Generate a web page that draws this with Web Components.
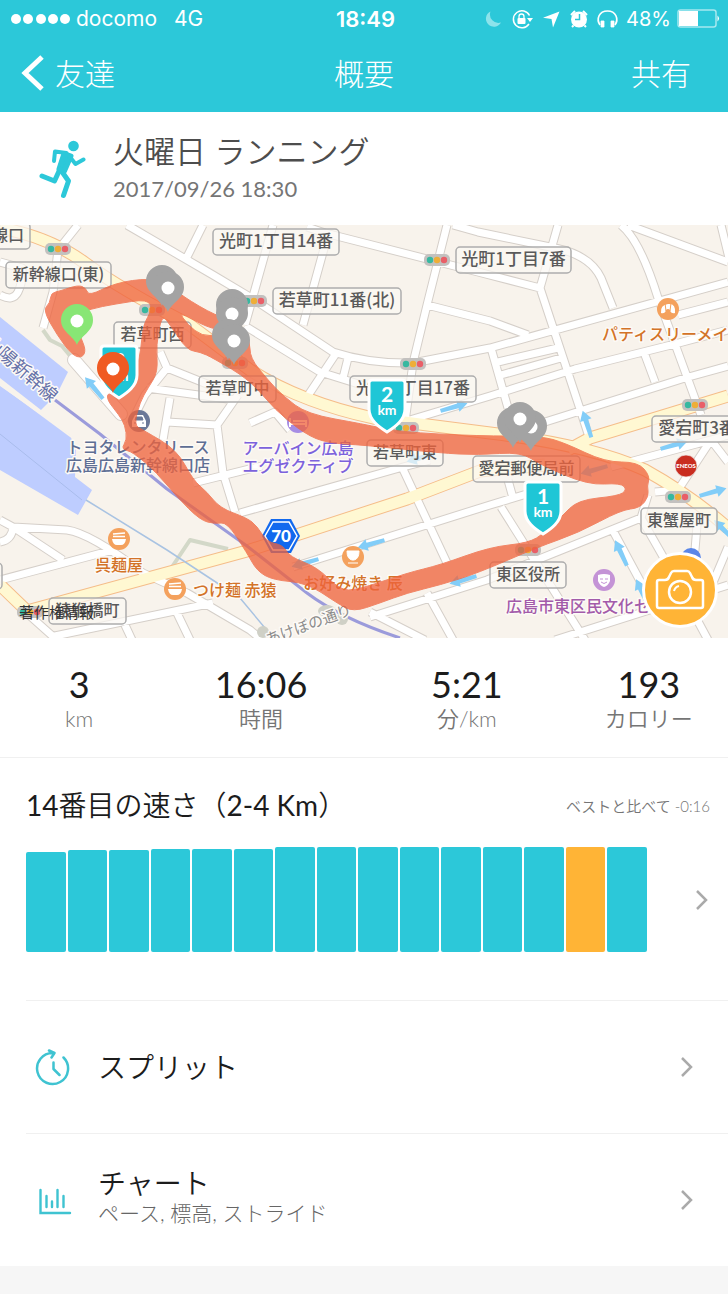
<!DOCTYPE html>
<html lang="ja">
<head>
<meta charset="utf-8">
<meta name="viewport" content="width=device-width, initial-scale=1">
<title>概要</title>
<style>
  html, body { margin: 0; background: #f6f6f6; }
  body { font-family: Lato, "Noto Sans CJK JP", sans-serif; color: #222; }
</style>
</head>
<body>
<run-summary></run-summary>

<script>
const define = (name, html) => {
  const tpl = document.createElement('template');
  tpl.innerHTML = html;
  customElements.define(name, class extends HTMLElement {
    constructor() {
      super();
      this.attachShadow({ mode: 'open' }).append(tpl.content.cloneNode(true));
    }
  });
};

/* Phone status line */
define('status-bar', `
<style>
  :host { display: grid; grid-template-columns: 1fr auto 1fr; align-items: center; height: 38px;
    padding: 0 8px 0 11px; color: #fff; font: 400 21px/24px Inter, sans-serif; }
  div { display: flex; align-items: center; }
  .left { gap: 5px; }
  .net { margin-left: 12px; }
  .right { justify-content: flex-end; gap: 6px; font-size: 20px; }
  .time { font-weight: 600; font-size: 22px; }
  svg { display: block; flex: none; }
</style>
<div class="left">
  <svg width="60" height="12" fill="#fff"><circle cx="5" cy="6" r="5"/><circle cx="17" cy="6" r="5"/><circle cx="30" cy="6" r="5"/><circle cx="42" cy="6" r="5"/><circle cx="54" cy="6" r="5"/></svg>
  <span>docomo</span><span class="net">4G</span>
</div>
<span class="time">18:49</span>
<div class="right">
  <svg width="136" height="22" viewBox="482 7 136 22" fill="none" stroke="#fff">
    <path d="M488.500 10.500A8 8 0 1 0 499 21.500A8.500 8.500 0 0 1 488.500 10.500z" fill="#8de3eb" stroke="none"/>
    <path d="M527.500 14.500a8.500 8.500 0 1 0-.5 8.500" stroke-width="1.500"/>
    <path d="M525 17h6l-3 4z" fill="#fff" stroke="none"/>
    <rect x="515.500" y="17" width="8" height="6" rx="1" fill="#fff" stroke="none"/>
    <path d="M517 17v-1.500a2.500 2.500 0 0 1 5 0V17" stroke-width="1.300"/>
    <path d="M557.500 10.500L551 26.500l-1.500-8.500-8.500-1.300z" fill="#fff" stroke="none"/>
    <circle cx="577" cy="18.500" r="8" fill="#fff" stroke="none"/>
    <path d="M569 14l4-4M585 14l-4-4M571.500 24.500l-1.500 1.500M582.500 24.500l1.500 1.500" stroke-width="2"/>
    <path d="M577.500 13v5.500H573" stroke="#2cc8d9" stroke-width="1.500"/>
    <path d="M598 24C594 18 597 10 605.500 10S617 18 613 24" stroke-width="1.700"/>
    <path d="M599 20h3v6h-3zM609 20h3v6h-3z" fill="#fff" stroke-width=".8"/>
  </svg>
  <span>48%</span>
  <svg width="43" height="20" viewBox="0 0 43 20"><rect x="1" y="1" width="38" height="17" rx="2.500" fill="none" stroke="#a5e8ef" stroke-width="1.500"/><rect x="2" y="2" width="19" height="15" fill="#fff"/><path d="M40.500 6.500q3 3 0 6z" fill="#fff"/></svg>
</div>`);

/* Title bar */
define('nav-bar', `
<style>
  :host { display: grid; grid-template-columns: 1fr auto 1fr; align-items: center; box-sizing: border-box; height: 74px;
    padding: 0 21px 4px; color: #fff; font: 300 30px/40px Lato, "Noto Sans CJK JP", sans-serif; }
  a, button, h1 { font: inherit; color: inherit; margin: 0; padding: 0; text-decoration: none; }
  a { display: flex; align-items: center; gap: 10px; }
  button { justify-self: end; border: 0; padding-right: 16px; background: none; }
  svg { display: block; }
</style>
<a href="#friends"><svg width="24" height="38"><path d="M21 3L4 19l17 16" fill="none" stroke="#fff" stroke-width="5"/></svg><span>友達</span></a>
<h1>概要</h1>
<button type="button">共有</button>`);

/* Activity name and date */
define('activity-header', `
<style>
  :host { display: flex; align-items: center; gap: 27px; box-sizing: border-box; height: 113px;
    padding: 0 39px; background: #fff; }
  svg { display: block; flex: none; }
  h2 { margin: 0; font: 350 31px/44px Lato, "Noto Sans CJK JP", sans-serif; color: #4d4d4d; }
  p { margin: 0; font: 400 22px/32px Lato, sans-serif; color: #757575; }
  div { padding-bottom: 4px; }
</style>
<svg width="47" height="60" viewBox="39 140 47 60" fill="none" stroke="#2cc8d9" stroke-linecap="round" stroke-linejoin="round">
  <circle cx="73.500" cy="147" r="5.300" fill="#2cc8d9" stroke="none"/>
  <path d="M54 162l1-9.500 11.500 1.500" stroke-width="4"/>
  <path d="M64 154.500l7 2.500-6.500 15-5.500-2z" fill="#2cc8d9" stroke-width="5"/>
  <path d="M70 158l5.500 7 8-4.500" stroke-width="4"/>
  <path d="M60 170l-5.500 12-12.500-5" stroke-width="5"/>
  <path d="M61.500 172l7 10-5 14.500" stroke-width="5"/>
</svg>
<div><h2><slot name="title"></slot></h2><p><slot name="date"></slot></p></div>`);

/* Street map: drawn from coordinate tables */
const roads = `
M78 225L58 250L53 292L43 328 M127 225L213 275L250 297L333 352Q370 364 413 363L490 348L728 282
M203 225L187 257 M0 295Q13 302 18 292T22 268L0 262 M160 352L167 368L227 392 M147 388L235 400 M167 368L145 395L130 425
M170 398L163 440 M167 422L217 425 M238 395L217 425L223 473L235 512 M193 483L262 466 M273 225L245 325 M325 245L303 325
M307 227L325 233L478 272L540 288 M447 225L427 305L413 363L405 422 M427 305L490 321L528 335
M245 326L320 372L365 386 M337 352L305 400 M348 358L343 378
M453 225L478 232L555 248Q590 255 601 278L613 308 M403 422L490 396L575 369L675 344L728 330 M545 422L685 378L728 366
M558 225L540 288L581 412L590 440 M621 225Q640 240 658 298L675 344L701 415 M628 225L728 262 M721 225L730 262
M678 315L728 302 M645 355L655 382 M491 348L508 408 M498 362L558 348 M501 375L561 358
M0 520L13 527L67 530Q90 533 143 573L187 593L250 630L262 640 M13 527Q12 540 0 542 M13 527L63 560 M0 580L113 550
M20 607L57 640 M50 637L213 603 M177 613L190 640 M125 625L132 640 M240 513L403 467L430 460 M402 467L447 563
M293 567L490 505L540 490 M370 617L487 580L641 518L648 495 M370 612L425 640 M427 593L453 640 M501 507L585 640
M611 527L645 590 M555 640L728 585 M641 518L665 560L708 640 M611 467L711 440L728 435 M711 440L678 490L655 492 M711 440L728 462
M508 480L513 498 M698 513L695 550L680 570 M728 547L712 585 M250 423L275 412L290 430`;
const yellowRoads = `M0 228Q50 237 85 263T190 325L250 370Q300 402 373 418L490 433Q590 445 645 470Q690 495 728 528 M568 450L590 438L728 396 M27 611L247 551L407 499L480 471L545 465 M0 585L27 611`;

/* Closed curve that rounds a list of "x,y" corners */
const smooth = list => {
  const p = list.trim().split(/\s+/).map(s => s.split(',').map(Number));
  const mid = i => { const a = p[i % p.length], b = p[(i + 1) % p.length]; return `${(a[0] + b[0]) / 2} ${(a[1] + b[1]) / 2}`; };
  return `M${mid(0)}` + p.map((_, i) => { const c = p[(i + 1) % p.length]; return `Q${c[0]} ${c[1]} ${mid(i + 1)}`; }).join('') + 'z';
};
const track = [
  `43,310 50,303 51,293 60,291 78,285 86,288 89,296 115,283 150,278 172,286 182,296 216,316 240,322 250,340 250,358 268,380 283,396 307,414
   363,424 400,432 478,436 541,436 565,443 605,462 638,462 650,476 647,486 649,496 640,508 621,510 578,533 538,547 478,573 440,585 407,593
   380,603 353,612 337,603 307,583 273,580 257,571 247,553 227,522 215,524 200,520 177,497 157,473 133,452 121,449 127,440 125,425 119,415 107,400
   108,392 120,400 135,378 141,350 143,325 152,310 148,299 115,304 90,309 74,316 80,336 86,350 82,358 72,355 57,335`,
  `162,314 170,325 187,350 200,352 213,358 250,380 275,410 305,434 327,443 363,445 440,453 478,455 521,452 541,465 588,485 621,483 627,490
   618,496 578,500 561,517 545,533 528,543 490,547 440,565 407,573 357,590 340,590 317,567 290,557 283,545 267,542 257,526 247,518 220,508
   207,492 193,480 177,450 143,430 134,425 140,402 148,388 158,372 156,345`,
  `178,311 188,325 202,336 218,335 226,330 208,328`
].map(smooth).join('');

const label = (x, y, w, t, size = 16) =>
  `<rect x="${x}" y="${y}" width="${w}" height="26" rx="4" fill="#fbf8f4" fill-opacity=".7" stroke="#adadad" stroke-width="1.500"/>
   <text x="${x + w / 2}" y="${y + 18}" text-anchor="middle" font-size="${size}" fill="#5a5a5a">${t}</text>`;
const boxed = [
  [-14, 223, 44, '線口'], [6, 262, 105, '新幹線口(東)'], [213, 229, 126, '光町1丁目14番', 17], [456, 247, 115, '光町1丁目7番', 17],
  [273, 288, 128, '若草町11番(北)', 17], [114, 322, 77, '若草町西'], [199, 376, 77, '若草町中'],
  [350, 376, 126, '光町1丁目17番', 17], [367, 440, 76, '若草町東'], [473, 456, 107, '愛宕郵便局前'],
  [652, 416, 90, '愛宕町3番', 17], [641, 508, 76, '東蟹屋町'], [490, 562, 76, '東区役所'], [49, 598, 77, '猿猴橋町'], [-20, 563, 22, '']
].map(a => label(...a)).join('');
const signals = [[58, 249], [152, 310], [254, 301], [437, 260], [413, 364], [406, 428], [695, 405], [678, 497], [528, 550], [235, 363], [30, 612]]
  .map(([x, y]) => `<use href="#signal" x="${x}" y="${y}"/>`).join('');
const arrows = [[94, 388, -130], [587, 424, -108], [454, 407, -16], [674, 445, -16], [371, 544, 164], [305, 563, 164],
  [463, 580, 164], [621, 553, -115], [713, 492, -16], [420, 458, 164], [594, 470, 164], [724, 530, -135], [642, 592, -115]]
  .map(([x, y, r]) => `<use href="#arrow" transform="translate(${x} ${y}) rotate(${r})"/>`).join('');
const poi = (x, y, t, fill, lines, tx, ty, anchor = 'middle') =>
  `<g transform="translate(${x} ${y})"><circle r="11" fill="${fill}"/>${t}</g>` +
  lines.map((l, i) => `<text class="poi" x="${tx}" y="${ty + i * 18}" text-anchor="${anchor}" font-size="16">${l}</text>`).join('');
const bowl = '<path d="M-7 0H7Q6 6 2 6H-2Q-6 6-7 0z" fill="#fff"/><path d="M-6-2.500H6M-6-5L6-6" stroke="#fff" stroke-width="1.500"/>';
const cup = '<path d="M-6-6H6Q6 2 1 3H-1Q-6 2-6-6zM-5 6H5" fill="#fff" stroke="#fff"/>';
const croissant = '<path d="M-7 4Q-8-4 0-5T7 4Q3 5 2 1Q0-1-2 1Q-3 5-7 4z" fill="#fff"/><path d="M-3-6L-2 2M3-6L2 2" stroke="#f4a15d"/>';
const pin = (x, y, c) => `<g transform="translate(${x} ${y})"><path d="M0 24C-3 15-16 11-16-1A16 16 0 0 1 16-1C16 11 3 15 0 24z" fill="${c}"/></g>`;
const dot = (x, y) => `<circle cx="${x}" cy="${y}" r="6.500" fill="#fff"/>`;
const shield = (x, y, n) => `<g transform="translate(${x} ${y})"><path d="M-15-26H15Q18-26 18-23V3C18 14 8 21 0 26C-8 21-18 14-18 3V-23Q-18-26-15-26z" fill="#1fc6d6" stroke="#fff" stroke-width="3"/>
  <text y="-4" text-anchor="middle" font-size="21" class="km">${n}</text><text y="9" text-anchor="middle" font-size="14" class="km">km</text></g>`;

define('run-map', `
<style>
  :host { display: block; position: relative; background: #f8f3ec; }
  .map { display: block; width: 100%; height: auto; font-family: "Noto Sans CJK JP", sans-serif; font-weight: 500; }
  .km { font-family: Lato, sans-serif; font-weight: 700; fill: #fff; }
  .poi { paint-order: stroke; stroke: #fdfaf6; stroke-width: 3px; stroke-linejoin: round; }
  .street { font-weight: 400; }
  button { position: absolute; right: 10px; bottom: 10px; width: 76px; height: 76px; padding: 0;
    border: 3px solid #fff; border-radius: 50%; background: #ffb436; display: grid; place-items: center; }
</style>
<svg class="map" viewBox="0 225 728 413" role="img" aria-label="ランニングコース">
  <defs>
    <g id="signal"><rect x="-13" y="-6" width="26" height="12" rx="5" fill="#c3c1bf"/><circle cx="-7" r="3.200" fill="#37b8a0"/><circle r="3.200" fill="#eeae38"/><circle cx="7" r="3.200" fill="#e95f68"/></g>
    <path id="arrow" d="M-14-2L4-2.500V-6L14 0L4 6V2.500L-14 2z" fill="#82cdf8"/>
  </defs>
  <g fill="#becdff"><path d="M0 317L68 372L57 394L41 410L0 378z"/><path d="M0 386L70 435L76 450L75 477L92 490L78 515L0 470z"/></g>
  <path d="M0 384L100 458" stroke="#f8f3ec" stroke-width="2"/>
  <path d="M0 434L82 500" stroke="#a9bcec" fill="none"/>
  <g fill="none" stroke-linejoin="round">
    <path d="M43 330L50 340L62 346L72 358M172 567L190 540L228 549" stroke="#d3d8c8" stroke-width="4"/>
    <path d="${roads}" stroke="#d5cfc9" stroke-width="9"/>
    <path d="M74 360L121 414" stroke="#d5cfc9" stroke-width="14" stroke-linecap="round"/>
    <path d="${yellowRoads}" stroke="#f5bd8a" stroke-width="13"/>
    <path d="${roads}" stroke="#fff" stroke-width="7"/>
    <path d="M74 360L121 414" stroke="#fff" stroke-width="12" stroke-linecap="round"/>
    <path d="${yellowRoads}" stroke="#fff8d2" stroke-width="11"/>
    <path d="M86 500L167 550L240 598L275 640" stroke="#a9c3e2" stroke-width="1.500"/>
    <path d="M55 400L100 434L167 489L247 546L307 593Q340 618 400 638" stroke="#9b9bdb" stroke-width="3"/>
  </g>
  <g fill="#cfd0c6"><ellipse cx="327" cy="611" rx="9" ry="6"/><circle cx="342" cy="619" r="6"/><circle cx="263" cy="632" r="6"/></g>
  ${arrows}${signals}
  <text class="poi street" transform="translate(-17 344) rotate(41)" font-size="18" fill="#6470a8">山陽新幹線</text>
  <text class="poi street" transform="translate(268 645) rotate(-20)" font-size="15" fill="#8c8c8c">あけぼの通り</text>
  ${boxed}
  <g fill="#5e6e94">${poi(139, 421, '<path d="M-7 0L-4-6H4L7 0V6H-7z" fill="#fff"/><path d="M-4-1L-3-4H3L4-1zM-5 2h2M3 2h2" fill="#6b7898" stroke="#6b7898"/>', '#6b7898', ['トヨタレンタリース', '広島広島新幹線口店'], 138, 453)}</g>
  <g fill="#7c62dc">${poi(298, 422, '<path d="M-8-4V5M-8 2H8V5M-5-1H8V2" stroke="#fff" fill="none" stroke-width="2"/>', '#a68de4', ['アーバイン広島', 'エグゼクティブ'], 298, 454)}</g>
  <g fill="#d37328">${poi(119, 539, bowl, '#f4a15d', ['呉麺屋'], 119, 571)}
    ${poi(175, 589, bowl, '#f4a15d', ['つけ麺 赤猿'], 193, 596, 'start')}
    ${poi(353, 557, cup, '#f4a15d', ['お好み焼き 辰'], 353, 589)}
    ${poi(668, 309, croissant, '#f4a15d', ['パティスリーメイ'], 602, 340, 'start')}</g>
  <g fill="#a35baa">${poi(604, 580, '<path d="M-6-5Q0-7 6-5V1Q4 6 0 7Q-4 6-6 1z" fill="#fff"/><path d="M-4-1h3M1-1h3M-3 2Q0 5 3 2" stroke="#c493d6" fill="none"/>', '#c493d6', ['広島市東区民文化セ'], 506, 612, 'start')}</g>
  <circle cx="691" cy="558" r="10" fill="#5a86e8"/>
  <circle cx="686" cy="466" r="11" fill="#c92d20" stroke="#eee" stroke-width=".7"/>
  <text x="686" y="468" text-anchor="middle" font-family="Lato" font-weight="900" font-size="6" fill="#fff">ENEOS</text>
  <path d="M271 519H291L300 536L291 553H271L262 536z" fill="#1269ee"/>
  <path d="M273 522H289L297 536L289 550H273L265 536z" fill="none" stroke="#fff" stroke-width="1.500"/>
  <text x="281" y="542" text-anchor="middle" font-family="Lato" font-weight="900" font-size="17" fill="#fff">70</text>
  <a href="#legal"><text class="street" x="19" y="618" font-size="15" fill="#333">著作権情報</text></a>

  <path d="${track}" opacity=".76" fill="#f0633c" stroke="#f0633c" stroke-width="1" fill-rule="evenodd"/>
  ${pin(162, 282, '#a3a3a3')}${pin(168, 288, '#a3a3a3')}${dot(168, 288)}
  ${pin(232, 306, '#a3a3a3')}${pin(232, 314, '#a3a3a3')}${dot(232, 314)}
  ${pin(228, 336, '#a3a3a3')}${pin(234, 341, '#a3a3a3')}${dot(234, 341)}
  ${pin(513, 424, '#a3a3a3')}${pin(531, 427, '#a3a3a3')}${dot(531, 427)}${pin(520, 419, '#a3a3a3')}${dot(520, 419)}
  ${pin(77, 321, '#88e675')}${dot(77, 321)}
  ${shield(119, 372, 3)}${pin(113, 369, '#f05a22')}${dot(113, 369)}
  ${shield(387, 406, 2)}${shield(543, 508, 1)}
</svg>
<button type="button" aria-label="写真を追加"><svg width="50" height="42" viewBox="0 0 50 42" fill="none" stroke="#fff" stroke-width="2.500" stroke-linejoin="round"><path d="M4 11H10Q13 11 14 8L16 4Q17 2 19 2H32Q34 2 35 4L37 8Q38 11 41 11H46Q48 11 48 13V37Q48 39 46 39H4Q2 39 2 37V13Q2 11 4 11z"/><circle cx="25" cy="23" r="11"/><path d="M19 22Q20 18 24 17" stroke-width="2"/></svg></button>`);

/* One figure with its unit */
define('stat-item', `
<style>
  :host { display: block; text-align: center; }
  dl { display: flex; flex-direction: column-reverse; margin: 0; }
  dd { margin: 0; font: 400 36px/40px Lato, sans-serif; color: #1c1c1c; }
  dt { font: 350 22px/30px Lato, "Noto Sans CJK JP", sans-serif; color: #757575; }
</style>
<dl><dt><slot name="unit"></slot></dt><dd><slot></slot></dd></dl>`);

define('stat-row', `
<style>
  :host { display: grid; grid-template-columns: 10fr 13fr 13fr 10fr; box-sizing: border-box; padding: 26px 0 23px;
    background: #fff; border-bottom: 1px solid #f0f0f0; }
</style><slot></slot>`);

/* Ranked-pace bar chart */
customElements.define('pace-chart', class extends HTMLElement {
  constructor() {
    super();
    const values = this.getAttribute('values').split(',');
    const current = Number(this.getAttribute('current'));
    const bars = values.map((v, i) => `<i style="height:${v}px"${i === current ? ' class="on"' : ''}></i>`).join('');
    this.attachShadow({ mode: 'open' }).innerHTML = `
<style>
  :host { display: block; background: #fff; padding: 26px 18px 48px 26px; }
  header { display: flex; align-items: center; justify-content: space-between; margin-bottom: 20px; }
  h3 { margin: 0; font: 400 28px/43px Lato, "Noto Sans CJK JP", sans-serif; color: #1c1c1c; }
  p { margin: 0; font: 350 15px/24px Lato, "Noto Sans CJK JP", sans-serif; color: #757575; }
  a { display: flex; align-items: center; gap: 46px; }
  .bars { flex: 1; display: flex; align-items: flex-end; gap: 2px; height: 105px; }
  i { flex: 1; background: #2cc8d9; border-radius: 2px; }
  i.on { background: #ffb436; }
  svg { display: block; flex: none; }
</style>
<header><h3><slot name="title"></slot></h3><p><slot name="note"></slot></p></header>
<a href="#ranking" aria-label="順位の詳細"><span class="bars">${bars}</span><svg width="17" height="24" fill="none" stroke="#aaa" stroke-width="2.500"><path d="M4 3l9 9-9 9"/></svg></a>`;
  }
});

/* Tappable row with an icon */
define('menu-row', `
<style>
  :host { display: block; background: #fff; padding-left: 26px; }
  a { display: flex; align-items: center; box-sizing: border-box; height: 133px; padding: 0 33px 0 8px;
    border-top: 1px solid #f0f0f0; text-decoration: none; color: #1c1c1c; }
  .text { flex: 1; display: flex; flex-direction: column; margin-left: 26px; }
  .title { font: 350 28px/34px Lato, "Noto Sans CJK JP", sans-serif; }
  .sub { font: 300 21px/26px Lato, "Noto Sans CJK JP", sans-serif; color: #666; }
  .sub ::slotted(span) { display: block; padding-bottom: 8px; }
  svg { display: block; flex: none; }
</style>
<a href="#detail"><slot name="icon"></slot><span class="text"><span class="title"><slot></slot></span><span class="sub"><slot name="sub"></slot></span></span>
<svg width="17" height="24" fill="none" stroke="#aaa" stroke-width="2.500"><path d="M4 3l9 9-9 9"/></svg></a>`);

define('run-summary', `
<style>
  :host { display: block; }
  .top { background: #2cc8d9; }
  svg { display: block; flex: none; }
  .ja { font-weight: 350; }
</style>
<header class="top"><status-bar></status-bar><nav-bar></nav-bar></header>
<main>
  <activity-header><span slot="title">火曜日 ランニング</span><span slot="date">2017/09/26 18:30</span></activity-header>
  <run-map></run-map>
  <stat-row>
    <stat-item>3<span slot="unit">km</span></stat-item>
    <stat-item>16:06<span slot="unit">時間</span></stat-item>
    <stat-item>5:21<span slot="unit">分/km</span></stat-item>
    <stat-item>193<span slot="unit">カロリー</span></stat-item>
  </stat-row>
  <pace-chart values="100,102,102,103,103,103,105,105,105,105,105,105,105,105,105" current="13">
    <span slot="title">14<span class="ja">番目の速さ（</span>2-4 Km<span class="ja">）</span></span><span slot="note">ベストと比べて -0:16</span>
  </pace-chart>
  <menu-row>
    <svg slot="icon" width="38" height="38" viewBox="34 1048 38 38" fill="none" stroke="#3fc3d1" stroke-width="2.500" stroke-linecap="round" stroke-linejoin="round"><path d="M63.500 1057.500A15.500 15.500 0 1 1 53 1053M49 1050.500L54.500 1053L51.500 1057.500M53.500 1062.500V1069L59.500 1075"/></svg>
    スプリット</menu-row>
  <menu-row>
    <svg slot="icon" width="38" height="38" viewBox="34 1180 38 38" fill="none" stroke="#3fc3d1" stroke-width="2.400" stroke-linecap="round"><path d="M40.500 1189V1212H70M46.500 1195V1206M52 1200.500V1206M57.500 1189V1206M63.500 1195V1206"/></svg>
    チャート<span slot="sub">ペース, 標高, ストライド</span></menu-row>
</main>`);
</script>
</body>
</html>
